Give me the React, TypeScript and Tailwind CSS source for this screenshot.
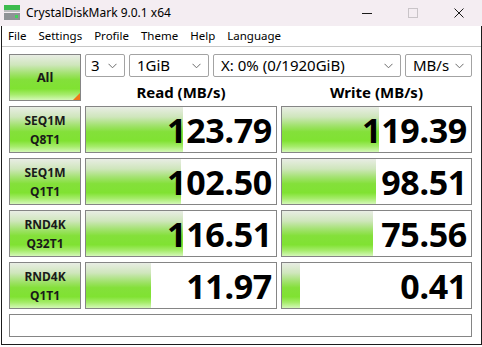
import React from "react";

const FILL =
  "bg-[linear-gradient(to_bottom,#e8ede4_0%,#cfe6bc_22%,#a4e272_40%,#84e03a_55%,#80e232_75%,#a6ec6c_88%,#d4f8b8_100%)]";

const ROWS = [
  { top: "SEQ1M", bottom: "Q8T1", read: "123.79", readW: 97, write: "119.39", writeW: 97 },
  { top: "SEQ1M", bottom: "Q1T1", read: "102.50", readW: 95, write: "98.51", writeW: 94 },
  { top: "RND4K", bottom: "Q32T1", read: "116.51", readW: 97, write: "75.56", writeW: 91 },
  { top: "RND4K", bottom: "Q1T1", read: "11.97", readW: 65, write: "0.41", writeW: 18 },
];

const MENU = ["File", "Settings", "Profile", "Theme", "Help", "Language"];

function Chevron() {
  return (
    <svg width="9" height="6" viewBox="0 0 9 6" className="shrink-0">
      <polyline points="0.5,0.8 4.5,4.8 8.5,0.8" fill="none" stroke="#6b6b6b" strokeWidth="1" />
    </svg>
  );
}

function Select({ label, w, pad }: { label: string; w: string; pad: string }) {
  return (
    <div
      className={`${w} h-[23px] flex items-center justify-between rounded-[2px] border border-[#a3a3a3] bg-white ${pad} pr-[7px]`}
    >
      <span className="text-[15px] leading-none text-black">{label}</span>
      <Chevron />
    </div>
  );
}

function Meter({ value, fill }: { value: string; fill: number }) {
  return (
    <div className="relative h-[47px] border border-[#858585] bg-white flex items-center justify-end pr-[4px]">
      <div className={`absolute left-0 top-0 bottom-0 ${FILL}`} style={{ width: fill }} />
      <span className="relative text-[34px] font-bold leading-none text-black tracking-[-0.3px]">{value}</span>
    </div>
  );
}

function TestButton({ top, bottom }: { top: string; bottom: string }) {
  return (
    <div className={`h-[47px] border border-[#858585] ${FILL} flex flex-col items-center justify-center`}>
      <span className="text-[12px] font-bold leading-[19px] text-[#1a1a1a]">{top}</span>
      <span className="text-[12px] font-bold leading-[19px] text-[#1a1a1a]">{bottom}</span>
    </div>
  );
}

export default function App() {
  return (
    <div className="w-[482px] h-[347px] bg-white overflow-hidden font-['Noto_Sans','Open_Sans',sans-serif] text-black">
      {/* Title bar */}
      <div className="h-[26px] bg-[#f4edf2] flex items-center">
        <svg width="16" height="16" viewBox="0 0 16 16" className="ml-[4px]">
          <rect x="0" y="0" width="16" height="5" fill="#3dbb4e" />
          <rect x="0" y="5" width="16" height="2" fill="#b9bcbd" />
          <rect x="0" y="8" width="16" height="7" fill="#8e9396" />
          <rect x="11" y="10" width="3" height="3" fill="#41d35a" />
        </svg>
        <span className="ml-[6px] text-[12px] leading-none">CrystalDiskMark 9.0.1 x64</span>
        <div className="ml-auto flex items-center">
          <div className="w-[46px] flex justify-center">
            <div className="w-[10px] h-px bg-[#1a1a1a]" />
          </div>
          <div className="w-[46px] flex justify-center">
            <div className="w-[10px] h-[10px] border border-[#c9c4c8]" />
          </div>
          <div className="w-[46px] flex justify-center">
            <svg width="10" height="10" viewBox="0 0 10 10">
              <path d="M0.5 0.5 L9.5 9.5 M9.5 0.5 L0.5 9.5" stroke="#1a1a1a" strokeWidth="1" />
            </svg>
          </div>
        </div>
      </div>

      {/* Window body */}
      <div className="ml-[1px] w-[481px] h-[319px] border-x border-b border-[#1c1c1c] flex flex-col">
        {/* Menu */}
        <div className="h-[21px] border-b border-[#c8c8c8] flex items-center pl-[6px] gap-[12px] text-[11.5px] leading-none">
          {MENU.map(m => (
            <span key={m}>{m}</span>
          ))}
        </div>

        {/* Main grid */}
        <div className="pl-[7px] pt-[7px] grid grid-cols-[72px_192px_191px] gap-x-[4px] gap-y-[5px]">
          {/* Header row */}
          <div className={`h-[47px] border border-[#858585] ${FILL} relative flex items-center justify-center`}>
            <span className="text-[13px] font-bold text-[#1a1a1a]">All</span>
            <svg width="7" height="7" viewBox="0 0 7 7" className="absolute right-0 bottom-0">
              <polygon points="7,0 7,7 0,7" fill="#f07818" />
            </svg>
          </div>
          <div className="col-span-2 flex flex-col">
            <div className="flex gap-[4px]">
              <Select label="3" w="w-[40px]" pad="pl-[5px]" />
              <Select label="1GiB" w="w-[80px]" pad="pl-[7px]" />
              <Select label="X: 0% (0/1920GiB)" w="w-[188px]" pad="pl-[7px]" />
              <Select label="MB/s" w="w-[67px]" pad="pl-[7px]" />
            </div>
            <div className="grid grid-cols-[192px_191px] gap-x-[4px] mt-[6px]">
              <div className="text-center text-[15px] font-bold leading-[18px]">Read (MB/s)</div>
              <div className="text-center text-[15px] font-bold leading-[18px]">Write (MB/s)</div>
            </div>
          </div>

          {ROWS.map(r => (
            <React.Fragment key={r.top + r.bottom}>
              <TestButton top={r.top} bottom={r.bottom} />
              <Meter value={r.read} fill={r.readW} />
              <Meter value={r.write} fill={r.writeW} />
            </React.Fragment>
          ))}

          {/* Message box */}
          <div className="col-span-3 h-[23px] border border-[#858585] bg-white" />
        </div>
      </div>
    </div>
  );
}
